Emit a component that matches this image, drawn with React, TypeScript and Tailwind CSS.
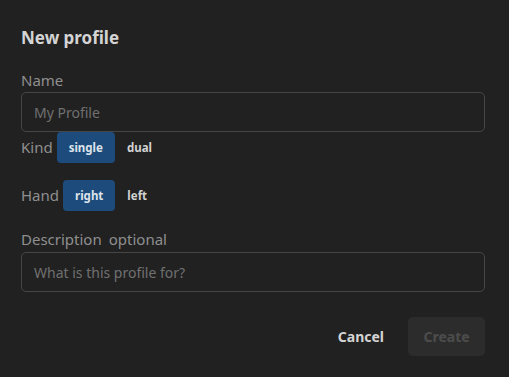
import React from "react";

export default function App() {
  const font = { fontFamily: '"Noto Sans", "Open Sans", sans-serif' };
  return (
    <div className="w-[509px] h-[377px] bg-[#212121] overflow-hidden" style={font}>
      <div className="px-[21px] pt-[26px] flex flex-col">
        <h1 className="text-[17px] leading-[24px] font-bold text-[#d4d4d4]">New profile</h1>
        <label className="mt-[20px] text-[15px] leading-[20px] text-[#8f8f8f]">Name</label>
        <div className="mt-[2px] h-[40px] w-[464px] border border-[#464646] rounded-[5px] flex items-center px-[12px]">
          <span className="text-[14px] text-[#707070]">My Profile</span>
        </div>
        <div className="flex items-center h-[31px]">
          <span className="text-[15px] text-[#8f8f8f] mr-[4px]">Kind</span>
          <div className="h-[31px] px-[12px] bg-[#1c4b7c] rounded-[4px] flex items-center text-[11.5px] font-bold text-[#dde3ea]">single</div>
          <div className="h-[31px] px-[12px] flex items-center text-[11.5px] font-bold text-[#d2d2d2]">dual</div>
        </div>
        <div className="mt-[17px] flex items-center h-[31px]">
          <span className="text-[15px] text-[#8f8f8f] mr-[4px]">Hand</span>
          <div className="h-[31px] px-[12px] bg-[#1c4b7c] rounded-[4px] flex items-center text-[11.5px] font-bold text-[#dde3ea]">right</div>
          <div className="h-[31px] px-[12px] flex items-center text-[11.5px] font-bold text-[#d2d2d2]">left</div>
        </div>
        <label className="mt-[18px] text-[15px] leading-[20px] text-[#8f8f8f]">Description<span className="ml-[7px]">optional</span></label>
        <div className="mt-[3px] h-[40px] w-[464px] border border-[#464646] rounded-[5px] flex items-center px-[12px]">
          <span className="text-[14px] text-[#707070]">What is this profile for?</span>
        </div>
        <div className="mt-[25px] flex justify-end items-center gap-[12px] w-[464px]">
          <button className="h-[39px] px-[12px] text-[14px] font-bold text-[#d4d4d4]">Cancel</button>
          <button className="h-[39px] w-[77px] rounded-[5px] bg-[#2c2c2c] text-[14px] font-bold text-[#4c4c4c]">Create</button>
        </div>
      </div>
    </div>
  );
}
